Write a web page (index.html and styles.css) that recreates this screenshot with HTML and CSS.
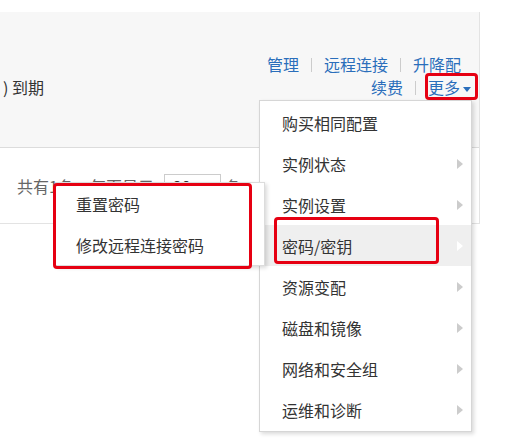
FILE: index.html
```html
<!DOCTYPE html>
<html lang="zh-CN">
<head>
    <meta charset="UTF-8">
    <title>实例列表 - 更多操作</title>
    <link rel="stylesheet" href="styles.css">
</head>
<body>
    <div class="page">
        <div class="table">
            <div class="head">
                <div class="expire">) 到期</div>
                <div class="actions">
                    <div class="row row-top">
                        <a href="#">管理</a><span class="sep"></span><a href="#">远程连接</a><span class="sep"></span><a href="#">升降配</a>
                    </div>
                    <div class="row">
                        <a href="#">续费</a><span class="sep"></span><a href="#" class="more">更多<span class="caret"></span></a>
                    </div>
                </div>
            </div>
            <div class="pager">
                共有1条，每页显示<span class="size">20</span>条
            </div>
        </div>

        <!-- 更多 dropdown -->
        <ul class="menu">
            <li>购买相同配置</li>
            <li>实例状态<span class="arrow"></span></li>
            <li>实例设置<span class="arrow"></span></li>
            <li class="active">密码/密钥<span class="arrow"></span></li>
            <li>资源变配<span class="arrow"></span></li>
            <li>磁盘和镜像<span class="arrow"></span></li>
            <li>网络和安全组<span class="arrow"></span></li>
            <li>运维和诊断<span class="arrow"></span></li>
        </ul>

        <ul class="submenu">
            <li>重置密码</li>
            <li>修改远程连接密码</li>
        </ul>
    </div>
</body>
</html>
```

FILE: styles.css
```css
body {
    margin: 0;
    background: #fff;
    font-family: "Noto Sans CJK SC", sans-serif;
    font-size: 16px;
    color: #333;
}
.page {
    position: relative;
    width: 526px;
    height: 446px;
    overflow: hidden;
}
.table {
    width: 480px;
    margin-top: 12px;
    box-sizing: border-box;
    border-right: 1px solid #e3e3e3;
}
.head {
    height: 136px;
    box-sizing: border-box;
    display: flex;
    justify-content: space-between;
    align-items: flex-end;
    padding: 0 8px 48px 0;
    background: #f7f7f7;
    border-bottom: 1px solid #dcdcdc;
}
.expire {
    margin-left: 3px;
    line-height: 23px;
    white-space: pre;
}
.actions {
    display: flex;
    flex-direction: column;
    align-items: flex-end;
}
.row {
    display: flex;
    align-items: center;
    line-height: 23px;
}
.row-top {
    margin-right: 10px;
}
.row a {
    color: #2a6ebb;
    text-decoration: none;
}
.sep {
    width: 1px;
    height: 14px;
    margin: 0 12px;
    background: #ccc;
}
.more {
    position: relative;
    display: inline-block;
}
.more::after {
    content: "";
    position: absolute;
    left: -3px;
    top: -3px;
    right: -7px;
    bottom: -1px;
    border: 3px solid #e60012;
    border-radius: 4px;
}
.caret {
    display: inline-block;
    margin-left: 3px;
    vertical-align: middle;
    border-left: 4px solid transparent;
    border-right: 4px solid transparent;
    border-top: 5px solid #2a6ebb;
}
.pager {
    height: 76px;
    box-sizing: border-box;
    display: flex;
    align-items: center;
    padding-left: 17px;
    color: #666;
    border-bottom: 1px solid #e3e3e3;
}
.size {
    width: 57px;
    height: 24px;
    box-sizing: border-box;
    margin: 0 4px 0 10px;
    padding-left: 8px;
    line-height: 22px;
    border: 1px solid #ccc;
    background: #fff;
    color: #333;
}
.menu, .submenu {
    position: absolute;
    margin: 0;
    list-style: none;
    box-sizing: border-box;
    background: #fff;
    box-shadow: 2px 2px 4px rgba(0, 0, 0, 0.15);
}
.menu {
    left: 259px;
    top: 100px;
    width: 213px;
    padding: 1px 0;
    border: 1px solid #d6d6d6;
    z-index: 1;
}
.menu li {
    position: relative;
    height: 41px;
    display: flex;
    justify-content: space-between;
    align-items: center;
    padding: 0 8px 0 22px;
}
.arrow {
    width: 0;
    height: 0;
    border-top: 5px solid transparent;
    border-bottom: 5px solid transparent;
    border-left: 6px solid #ccc;
}
.menu li.active {
    background: #efefef;
}
.menu li.active .arrow {
    border-left-color: #fff;
}
.menu li.active::after {
    content: "";
    position: absolute;
    left: 14px;
    top: -8px;
    width: 165px;
    height: 47px;
    box-sizing: border-box;
    border: 3px solid #e60012;
    border-radius: 4px;
}
.submenu {
    left: 55px;
    top: 182px;
    width: 210px;
    padding: 0;
    border: 1px solid #dcdcdc;
    z-index: 2;
}
.submenu li {
    height: 41px;
    display: flex;
    align-items: center;
    padding-left: 20px;
}
.submenu::after {
    content: "";
    position: absolute;
    left: -3px;
    top: 0;
    width: 199px;
    height: 86px;
    box-sizing: border-box;
    border: 3px solid #e60012;
    border-radius: 4px;
}
```
